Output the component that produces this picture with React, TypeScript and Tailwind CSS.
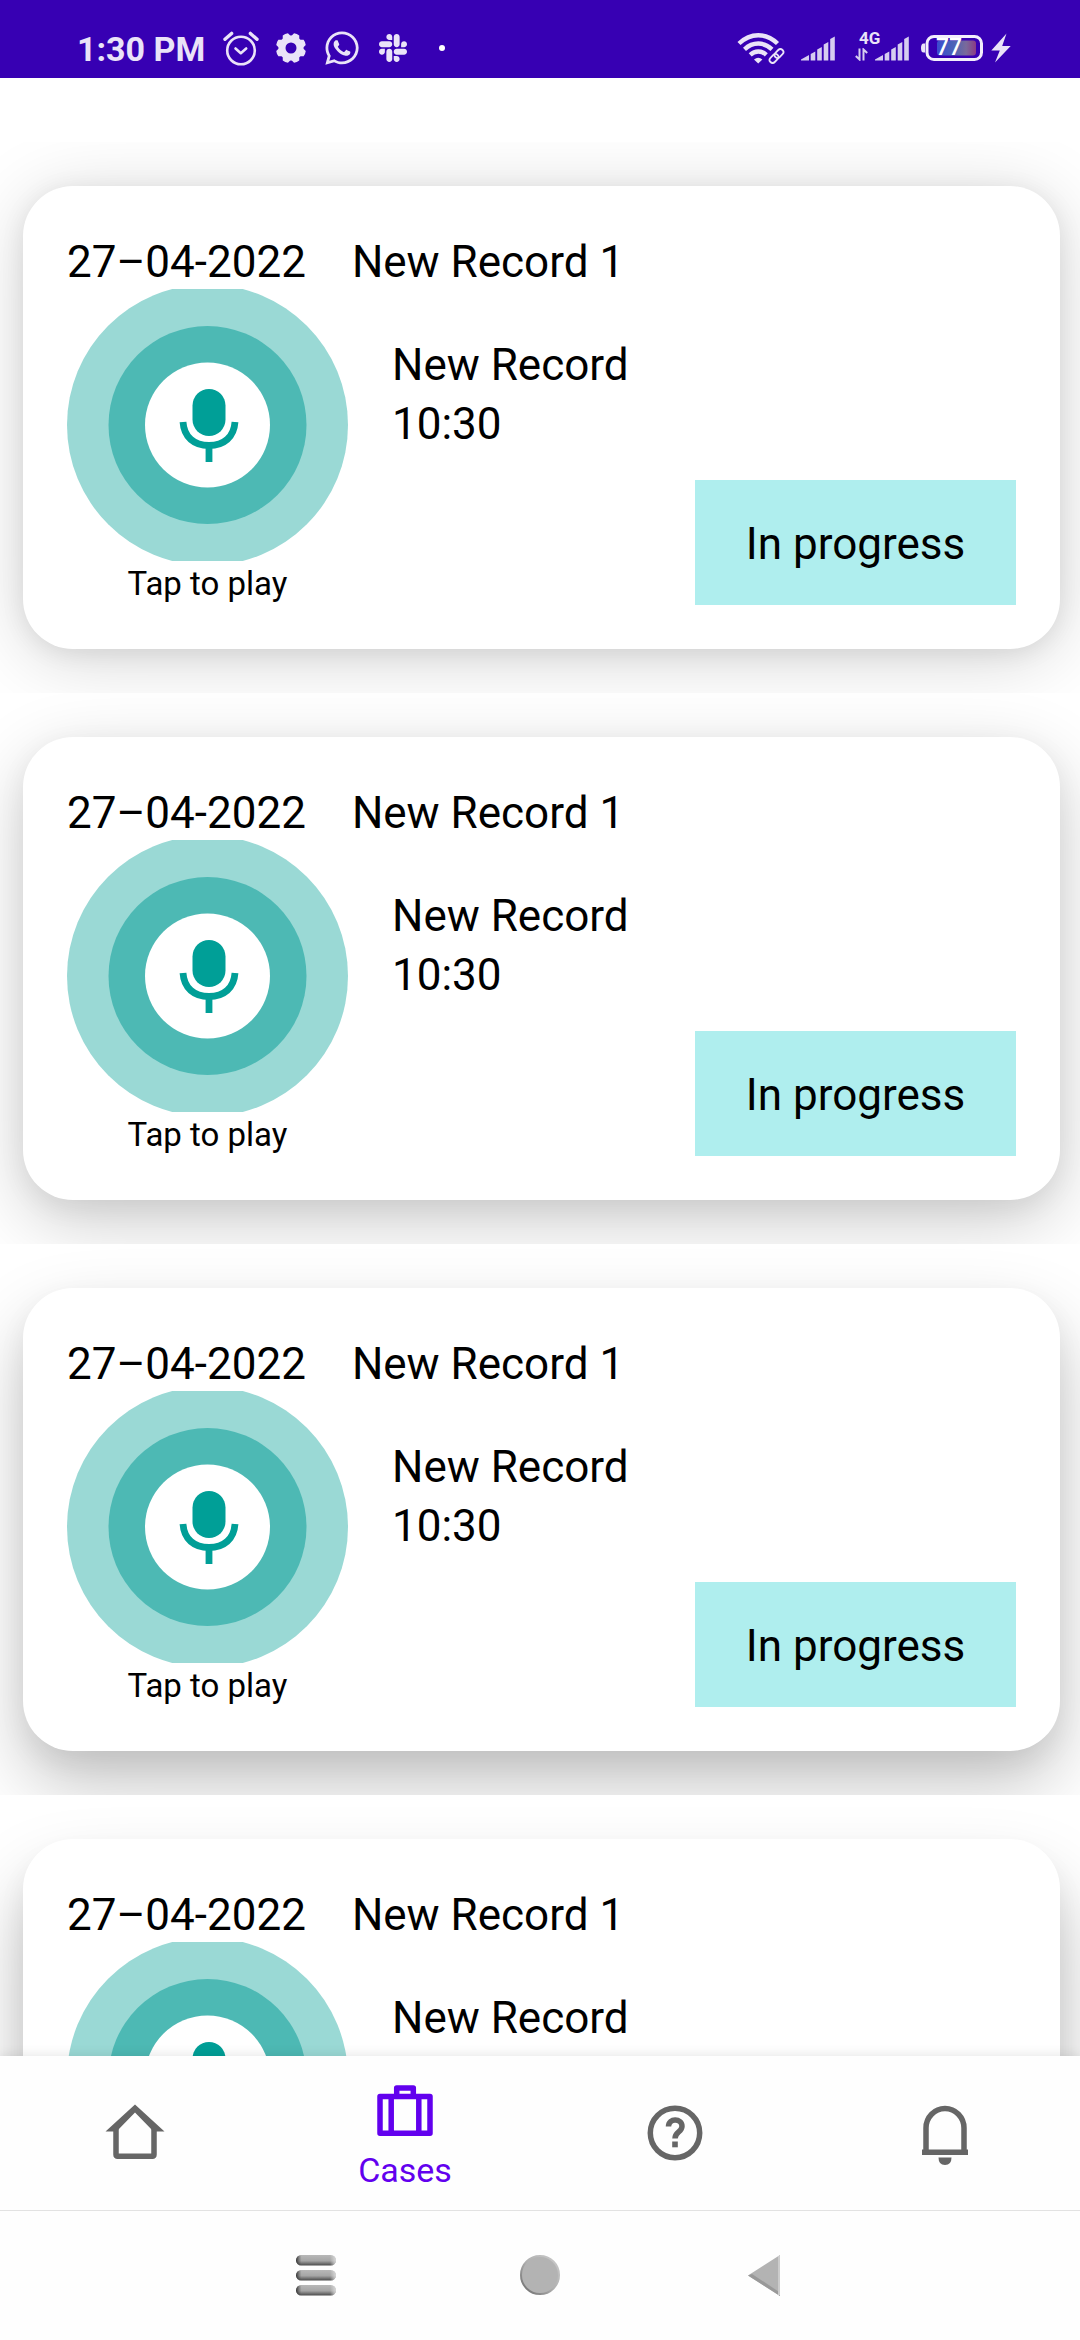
import { FaSlack, FaWhatsapp } from "react-icons/fa";

const records = [
  { id: 1, shadow: "shadow-[0_10px_72px_rgba(0,0,0,0.17),0_4px_24px_rgba(0,0,0,0.08)]" },
  { id: 2, shadow: "shadow-[0_22px_72px_rgba(0,0,0,0.20),0_8px_28px_rgba(0,0,0,0.06)]" },
  { id: 3, shadow: "shadow-[0_34px_72px_rgba(0,0,0,0.23),0_12px_28px_rgba(0,0,0,0.06)]" },
  { id: 4, shadow: "shadow-[0_44px_72px_rgba(0,0,0,0.26),0_16px_28px_rgba(0,0,0,0.06)]" },
];

function AlarmIcon() {
  return (
    <svg width="36" height="36" viewBox="0 0 36 36" fill="none" stroke="currentColor" strokeWidth="2.6" strokeLinecap="round" strokeLinejoin="round">
      <circle cx="18" cy="20.5" r="13.8" />
      <path d="M12.5 18.5 17.8 23.2 23.2 18.5" />
      <path d="M2 9.3 8.6 3.4M34 9.3 27.4 3.4" strokeWidth="3.4" />
    </svg>
  );
}

function GearIcon() {
  const teeth = [0, 45, 90, 135, 180, 225, 270, 315];
  return (
    <svg width="32" height="32" viewBox="0 0 32 32">
      <circle cx="16" cy="16" r="9" fill="none" stroke="currentColor" strokeWidth="7" />
      {teeth.map((angle) => (
        <path key={angle} d="M11.4 5.5 13.2 1.200q2.800-.8 5.600 0l1.800 4.300z" fill="currentColor" transform={`rotate(${angle + 22.5} 16 16)`} />
      ))}
    </svg>
  );
}

function WifiIcon() {
  return (
    <svg width="48" height="32" viewBox="0 0 48 32" fill="none" stroke="currentColor">
      <path d="M2 11.500C13.500.4 29 .4 40.500 11.500" strokeWidth="4.400" />
      <path d="M7.500 17.300C15.800 9.600 26.700 9.600 35 17.300" strokeWidth="4.400" />
      <path d="M13.200 22.800C18 18.400 24.500 18.400 29.300 22.800" strokeWidth="4.400" />
      <path d="M17 27.500q4.200-3.600 8.400 0l-4.200 4z" fill="currentColor" stroke="none" />
      <g strokeWidth="1.800" transform="rotate(-45 39.500 24)">
        <rect x="31" y="21" width="10" height="6" rx="3" />
        <rect x="38" y="21" width="10" height="6" rx="3" />
      </g>
    </svg>
  );
}

function SignalIcon() {
  return (
    <svg width="34" height="25" viewBox="0 0 34 25" fill="currentColor">
      <path d="M0 24.500v-1L8 19v5.500zM9.700 18l4.600-2.500v9H9.700zM16.200 13.500l4.600-2.500v13.500h-4.600zM22.700 8.500l4.600-2.500v18.500h-4.600zM29.200 3l4.600-2.500v24h-4.600z" />
    </svg>
  );
}

function BatteryIcon() {
  return (
    <span className="relative flex h-[26px] w-[62px]">
      <svg width="62" height="26" viewBox="0 0 62 26">
        <defs>
          <linearGradient id="charge" x1="0" x2="1">
            <stop offset="0" stopColor="#3b4bd0" />
            <stop offset=".4" stopColor="#4a62b8" />
            <stop offset=".75" stopColor="#7a6a9a" />
            <stop offset="1" stopColor="#8a3a86" />
          </linearGradient>
        </defs>
        <path d="M4 8.500H2.500Q0 8.500 0 13t2.500 4.500H4z" fill="#EAE3F8" />
        <rect x="6" y="1.500" width="54.500" height="23" rx="7" fill="none" stroke="#F3EEFC" strokeWidth="3" />
        <rect x="16" y="5.500" width="39" height="15" rx="3" fill="url(#charge)" />
      </svg>
      <span className="absolute top-0 left-[15px] text-[23px] leading-[26px] font-medium text-white">77</span>
    </span>
  );
}

function StatusBar() {
  return (
    <header className="flex h-[78px] shrink-0 items-center justify-between bg-[#3700B3] pt-[18px] pr-[69px] pl-[77px] text-[#EAE3F8]">
      <div className="flex items-center">
        <time className="pt-[2px] text-[34px] leading-10 font-bold">1:30 PM</time>
        <div className="ml-[18px] flex items-center gap-[16px]">
          <AlarmIcon />
          <GearIcon />
          <FaWhatsapp size={38} />
          <FaSlack size={32} />
        </div>
        <span className="ml-[30px] size-[6px] rounded-full bg-white" />
      </div>
      <div className="flex items-center">
        <WifiIcon />
        <span className="ml-4 text-[#D6CCF0]">
          <SignalIcon />
        </span>
        <span className="relative ml-10 text-[#D6CCF0]">
          <SignalIcon />
          <span className="absolute -top-2 -left-4 text-[17px] leading-5 font-bold text-[#EAE3F8]">4G</span>
          <svg className="absolute top-3 -left-5" width="13" height="13" viewBox="0 0 13 13" fill="none" stroke="currentColor" strokeWidth="2">
            <path d="M4.500.5v11L.8 8M8.500 12.500v-11L12.200 5" />
          </svg>
        </span>
        <span className="ml-3">
          <BatteryIcon />
        </span>
        <svg className="ml-2" width="20" height="30" viewBox="0 0 20 30" fill="currentColor">
          <path d="M15.500.5.3 17.500h8.500L4 29.500 19.700 13h-8.500z" />
        </svg>
      </div>
    </header>
  );
}

function MicArtwork() {
  return (
    <svg className="block" width="281" height="272" viewBox="0 0 281 272">
      <circle cx="140.500" cy="136" r="140.500" fill="#9AD9D5" />
      <circle cx="140.500" cy="136" r="99" fill="#4DB9B4" />
      <circle cx="140.500" cy="136" r="62.500" fill="#fff" />
      <rect x="125.500" y="100" width="33" height="47" rx="16.500" fill="#009F97" />
      <path d="M116 133c1 15 11 23.500 26 23.500s25-8.500 26-23.500M142 156v17" fill="none" stroke="#009F97" strokeWidth="6.800" />
    </svg>
  );
}

function RecordCard({ shadow }: { shadow: string }) {
  return (
    <li className="overflow-hidden pt-[44px] pr-5 pb-[44px] pl-[23px]">
      <article className={`rounded-[50px] bg-white px-[44px] pt-[50px] pb-[44px] ${shadow}`}>
        <div className="flex gap-[46px] leading-[53px]">
          <time dateTime="2022-04-27">27–04-2022</time>
          <h2>New Record 1</h2>
        </div>
        <div className="flex">
          <button type="button" className="flex flex-col items-center text-[33px] leading-[46px]">
            <MicArtwork />
            <span className="-mb-[2px]">Tap to play</span>
          </button>
          <div className="ml-[44px] flex grow flex-col pt-[47px] leading-[59px]">
            <p>New Record</p>
            <p>10:30</p>
            <button type="button" className="mt-auto h-[125px] w-[321px] self-end bg-[#AFEEEE] pt-[4px]">
              In progress
            </button>
          </div>
        </div>
      </article>
    </li>
  );
}

function HomeIcon() {
  return (
    <svg width="66" height="66" viewBox="0 0 66 66" fill="none" stroke="currentColor">
      <path d="M14 29v25.500q0 1.700 1.700 1.700h34.600q1.700 0 1.700-1.700V29" strokeWidth="5.500" />
      <path d="M33 4.500 62.500 31.500H51.500L33 12.500 14.500 31.500H3.500z" fill="currentColor" stroke="none" />
    </svg>
  );
}

function CasesIcon() {
  return (
    <svg width="66" height="66" viewBox="0 0 66 66" fill="none" stroke="currentColor" strokeWidth="5.500" strokeLinejoin="round">
      <path d="M8 20.500h50v36.700H8zM19.200 20.500v36.700M46.800 20.500v36.700M24.700 20v-8h16.600v8" />
    </svg>
  );
}

function HelpIcon() {
  return (
    <svg width="66" height="66" viewBox="0 0 66 66" fill="none" stroke="currentColor">
      <circle cx="33" cy="33" r="24.700" strokeWidth="5.500" />
      <path d="M26.500 26.500c0-9 13.500-8 13.500-.3 0 6-7 5.500-7 12.300" strokeWidth="5.500" />
      <path d="M30.200 41.500h5.600v5.800h-5.600z" fill="currentColor" stroke="none" />
    </svg>
  );
}

function BellIcon() {
  return (
    <svg width="66" height="66" viewBox="0 0 66 66" fill="none" stroke="currentColor">
      <path d="M14 52V28a19 19.500 0 0 1 38 0v24M10 52.200h46" strokeWidth="5.500" />
      <path d="M26.500 57.500h13q0 7.500-6.500 7.500t-6.500-7.500z" fill="currentColor" stroke="none" />
    </svg>
  );
}

function TabBar() {
  return (
    <nav className="relative flex h-[154px] shrink-0 bg-[#FEFEFE] text-[#666666] shadow-[0_0_12px_rgba(0,0,0,0.12)]">
      <button type="button" aria-label="Home" className="flex flex-1 items-center justify-center">
        <HomeIcon />
      </button>
      <button type="button" aria-current="page" className="flex flex-1 flex-col items-center justify-center gap-2 text-[34px] leading-[40px] text-[#6200EE]">
        <CasesIcon />
        Cases
      </button>
      <button type="button" aria-label="Help" className="flex flex-1 items-center justify-center">
        <HelpIcon />
      </button>
      <button type="button" aria-label="Notifications" className="flex flex-1 items-center justify-center">
        <BellIcon />
      </button>
    </nav>
  );
}

function SystemBar() {
  return (
    <nav className="relative flex h-[130px] shrink-0 items-center justify-center gap-[184px] border-t border-[#E2E2E2] bg-[#FEFEFE]">
      <button type="button" aria-label="Recent apps">
        <svg width="40" height="42" viewBox="0 0 40 42">
          <defs>
            <linearGradient id="bar" x1="0" x2="0" y1="0" y2="1">
              <stop offset="0" stopColor="#b8b8b8" />
              <stop offset=".55" stopColor="#a6a6a6" />
              <stop offset="1" stopColor="#4a4a4a" />
            </linearGradient>
            <linearGradient id="edge" x1="0" x2="1">
              <stop offset="0" stopColor="#222" stopOpacity=".9" />
              <stop offset=".14" stopColor="#555" stopOpacity="0" />
              <stop offset=".85" stopColor="#ddd" stopOpacity="0" />
              <stop offset="1" stopColor="#ddd" stopOpacity=".9" />
            </linearGradient>
          </defs>
          {[0, 15, 30].map((y) => (
            <g key={y}>
              <rect y={y} width="40" height="10.500" rx="5.200" fill="url(#bar)" />
              <rect y={y} width="40" height="10.500" rx="5.200" fill="url(#edge)" />
            </g>
          ))}
        </svg>
      </button>
      <button type="button" aria-label="Home screen">
        <svg width="40" height="42" viewBox="0 0 40 42">
          <defs>
            <linearGradient id="rim" x1="0" x2="1" y1="1" y2="0">
              <stop offset=".1" stopColor="#777" />
              <stop offset=".5" stopColor="#b0b0b0" />
              <stop offset="1" stopColor="#ccc" />
            </linearGradient>
          </defs>
          <circle cx="20" cy="20" r="19" fill="#B3B3B3" stroke="url(#rim)" strokeWidth="2" />
        </svg>
      </button>
      <button type="button" aria-label="Back">
        <svg width="40" height="42" viewBox="0 0 40 42">
          <path d="M4 20.500 36 0v41z" fill="#B3B3B3" />
          <path d="M4 20.500 36 41v-3.500L8 19z" fill="#999" />
          <path d="M35 1v39" stroke="#ccc" strokeWidth="2" />
        </svg>
      </button>
    </nav>
  );
}

export default function App() {
  return (
    <div className="flex h-screen flex-col bg-white font-['Roboto',sans-serif] text-[44px] text-black">
      <StatusBar />
      <main className="min-h-0 grow overflow-y-auto pt-[64px] [scrollbar-width:none]">
        <ul>
          {records.map((record) => (
            <RecordCard key={record.id} shadow={record.shadow} />
          ))}
        </ul>
      </main>
      <TabBar />
      <SystemBar />
    </div>
  );
}
